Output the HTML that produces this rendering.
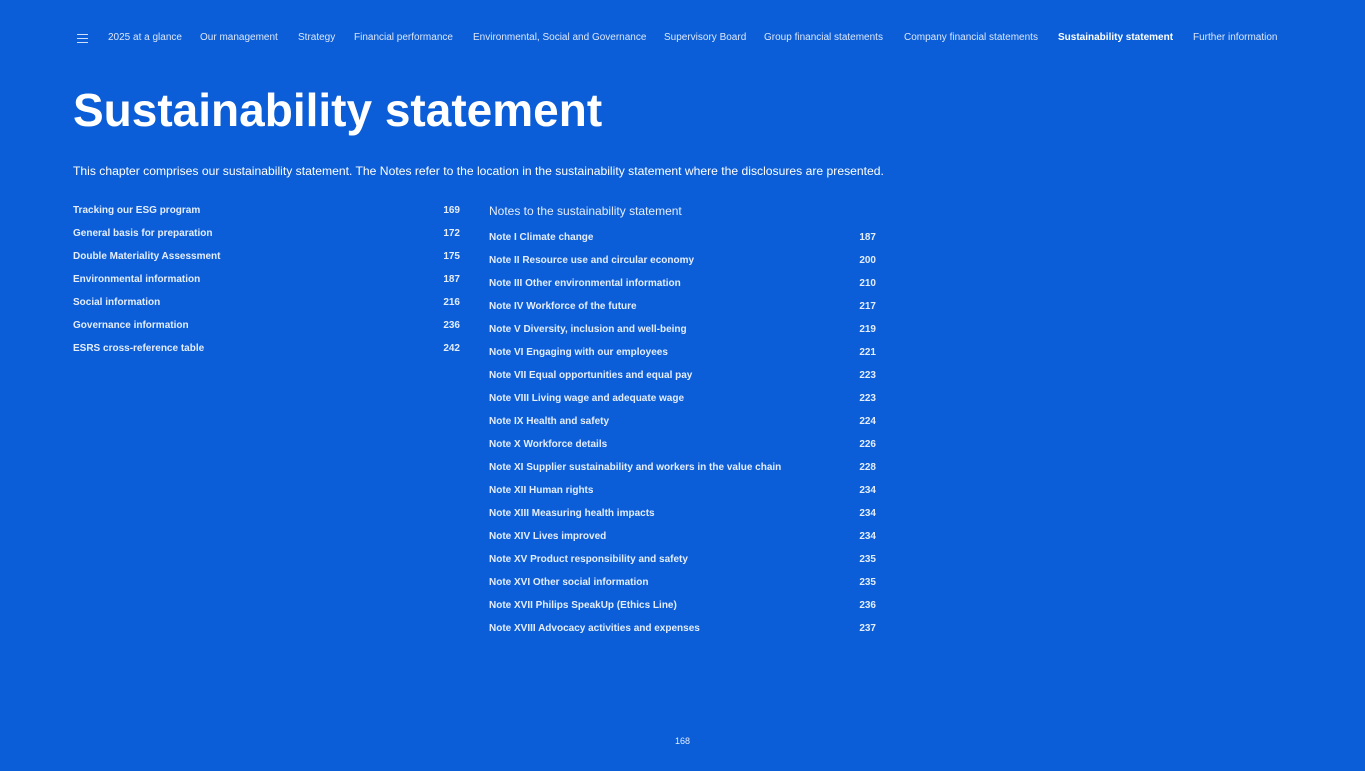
<!DOCTYPE html>
<html><head><meta charset="utf-8"><style>
*{margin:0;padding:0;box-sizing:border-box}
body{width:1365px;height:771px;background:#0b5ed7;font-family:"Liberation Sans",sans-serif;color:#e4edfb;position:relative;overflow:hidden}
.nav{position:absolute;top:32px;font-size:10px;white-space:nowrap;color:#dce7fa}
.ham{position:absolute;left:77px;top:34px;width:11px}
.ham i{display:block;height:1px;background:#cfe0fa;margin-bottom:3px}
h1{position:absolute;left:73px;top:83px;font-size:46px;font-weight:bold;color:#fff;letter-spacing:0px}
.intro{position:absolute;left:73px;top:164px;font-size:12.15px;color:#fff}
.row{position:absolute;font-size:10px;font-weight:bold;white-space:nowrap;margin-top:1px}
.num{position:absolute;font-size:10px;font-weight:bold;text-align:right;width:40px;margin-top:1px}
</style></head><body>
<div class="ham"><i></i><i></i><i></i></div>
<div class="nav" style="left:108px">2025 at a glance</div>
<div class="nav" style="left:200px">Our management</div>
<div class="nav" style="left:298px">Strategy</div>
<div class="nav" style="left:354px">Financial performance</div>
<div class="nav" style="left:473px">Environmental, Social and Governance</div>
<div class="nav" style="left:664px">Supervisory Board</div>
<div class="nav" style="left:764px">Group financial statements</div>
<div class="nav" style="left:904px">Company financial statements</div>
<div class="nav" style="left:1058px;font-weight:bold;color:#fff">Sustainability statement</div>
<div class="nav" style="left:1193px">Further information</div>
<h1>Sustainability statement</h1>
<div class="intro">This chapter comprises our sustainability statement. The Notes refer to the location in the sustainability statement where the disclosures are presented.</div>
<div class="row" style="left:73px;top:204px">Tracking our ESG program</div><div class="num" style="left:420px;top:204px">169</div>
<div class="row" style="left:73px;top:227px">General basis for preparation</div><div class="num" style="left:420px;top:227px">172</div>
<div class="row" style="left:73px;top:250px">Double Materiality Assessment</div><div class="num" style="left:420px;top:250px">175</div>
<div class="row" style="left:73px;top:273px">Environmental information</div><div class="num" style="left:420px;top:273px">187</div>
<div class="row" style="left:73px;top:296px">Social information</div><div class="num" style="left:420px;top:296px">216</div>
<div class="row" style="left:73px;top:319px">Governance information</div><div class="num" style="left:420px;top:319px">236</div>
<div class="row" style="left:73px;top:342px">ESRS cross-reference table</div><div class="num" style="left:420px;top:342px">242</div>
<div class="row" style="left:489px;top:203px;font-size:12px;font-weight:normal">Notes to the sustainability statement</div>
<div class="row" style="left:489px;top:231px">Note I Climate change</div><div class="num" style="left:836px;top:231px">187</div>
<div class="row" style="left:489px;top:254px">Note II Resource use and circular economy</div><div class="num" style="left:836px;top:254px">200</div>
<div class="row" style="left:489px;top:277px">Note III Other environmental information</div><div class="num" style="left:836px;top:277px">210</div>
<div class="row" style="left:489px;top:300px">Note IV Workforce of the future</div><div class="num" style="left:836px;top:300px">217</div>
<div class="row" style="left:489px;top:323px">Note V Diversity, inclusion and well-being</div><div class="num" style="left:836px;top:323px">219</div>
<div class="row" style="left:489px;top:346px">Note VI Engaging with our employees</div><div class="num" style="left:836px;top:346px">221</div>
<div class="row" style="left:489px;top:369px">Note VII Equal opportunities and equal pay</div><div class="num" style="left:836px;top:369px">223</div>
<div class="row" style="left:489px;top:392px">Note VIII Living wage and adequate wage</div><div class="num" style="left:836px;top:392px">223</div>
<div class="row" style="left:489px;top:415px">Note IX Health and safety</div><div class="num" style="left:836px;top:415px">224</div>
<div class="row" style="left:489px;top:438px">Note X Workforce details</div><div class="num" style="left:836px;top:438px">226</div>
<div class="row" style="left:489px;top:461px">Note XI Supplier sustainability and workers in the value chain</div><div class="num" style="left:836px;top:461px">228</div>
<div class="row" style="left:489px;top:484px">Note XII Human rights</div><div class="num" style="left:836px;top:484px">234</div>
<div class="row" style="left:489px;top:507px">Note XIII Measuring health impacts</div><div class="num" style="left:836px;top:507px">234</div>
<div class="row" style="left:489px;top:530px">Note XIV Lives improved</div><div class="num" style="left:836px;top:530px">234</div>
<div class="row" style="left:489px;top:553px">Note XV Product responsibility and safety</div><div class="num" style="left:836px;top:553px">235</div>
<div class="row" style="left:489px;top:576px">Note XVI Other social information</div><div class="num" style="left:836px;top:576px">235</div>
<div class="row" style="left:489px;top:599px">Note XVII Philips SpeakUp (Ethics Line)</div><div class="num" style="left:836px;top:599px">236</div>
<div class="row" style="left:489px;top:622px">Note XVIII Advocacy activities and expenses</div><div class="num" style="left:836px;top:622px">237</div>
<div class="row" style="left:675px;top:735px;font-weight:normal;font-size:9px">168</div>
</body></html>
